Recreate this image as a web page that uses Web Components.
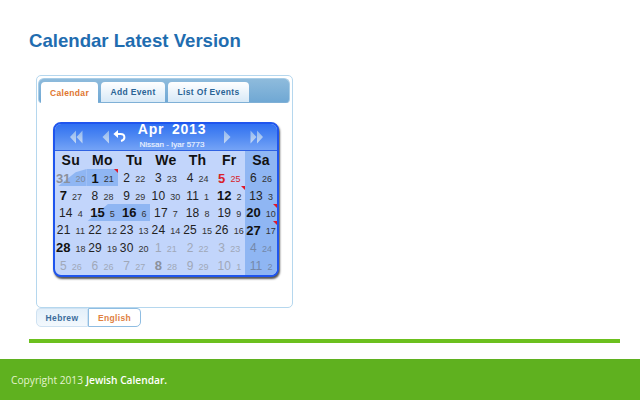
<!DOCTYPE html>
<html><head><meta charset="utf-8"><style>
html,body{margin:0;padding:0;background:#fff;height:400px;overflow:hidden}
</style></head><body>
<jc-page></jc-page>
<script>
class JcTabs extends HTMLElement{constructor(){super();this.attachShadow({mode:'open'}).innerHTML=`<style>
:host{display:flex;gap:3px;height:25px;box-sizing:border-box;margin:2px 2px 0 1px;padding:3px 0 0 2px;border-radius:6px 6px 4px 4px;background:linear-gradient(#8ebbdc,#70a8d4);border:1px solid #a9cde6;border-bottom:1px solid #7fb0d6;font:bold 8.5px "Liberation Sans",sans-serif;letter-spacing:.35px}
b{display:flex;align-items:center;justify-content:center;height:20px;border-radius:4px 4px 0 0;color:#2a6496;background:linear-gradient(#ffffff,#d7e9f7);font-weight:bold}
b.on{color:#e0762f;background:#fff;height:22px;margin-bottom:-2px}
</style><b class="on" style="width:57px">Calendar</b><b style="width:64px">Add Event</b><b style="width:81px">List Of Events</b>`}}
customElements.define('jc-tabs',JcTabs);

class JcArrow extends HTMLElement{constructor(){super();const k=this.getAttribute('kind');
const d={ll:'M7 .5L1 7L7 13.5ZM13.5 .5L7.5 7L13.5 13.5Z',l:'M7 .5L.5 7L7 13.5Z',r:'M1 .5L7.5 7L1 13.5Z',rr:'M.5 .5L6.5 7L.5 13.5ZM7 .5L13 7L7 13.5Z'}[k];
const w=(k=='ll'||k=='rr')?14:8;
this.attachShadow({mode:'open'}).innerHTML=`<style>:host{display:block;line-height:0}</style><svg width="${w}" height="14" viewBox="0 0 ${w} 14"><defs><linearGradient id="g" x1="0" y1="0" x2="0" y2="1"><stop offset="0" stop-color="#8fb6ee"/><stop offset="1" stop-color="#c6d9f4"/></linearGradient></defs><path d="${d}" fill="url(#g)"/></svg>`}}
customElements.define('jc-arrow',JcArrow);

class JcUndo extends HTMLElement{constructor(){super();this.attachShadow({mode:'open'}).innerHTML=`<style>:host{display:block;line-height:0;margin-top:-3px}</style><svg width="13" height="12" viewBox="0 0 13 12"><path d="M3.5 4H7.5C10 4 11.4 5.5 11.4 7.3C11.4 9.1 10 10.6 8 11" fill="none" stroke="#fff" stroke-width="2"/><path d="M5 0V8L.4 4Z" fill="#fff"/></svg>`}}
customElements.define('jc-undo',JcUndo);

class JcCell extends HTMLElement{constructor(){super();
const a=n=>this.getAttribute(n);
this.attachShadow({mode:'open'}).innerHTML=`<style>
:host{display:flex;align-items:center;justify-content:center;gap:5px;position:relative;padding-top:1px;box-sizing:border-box;font:12px "Liberation Sans",sans-serif;color:#222;white-space:nowrap;min-width:0}
b{font-weight:normal;position:relative;font-size:12px;letter-spacing:.2px}
i{font-style:normal;font-size:9px;position:relative;top:1px;color:#333}
:host(.bold) b{font-weight:bold;font-size:13px;color:#111;letter-spacing:0}
:host(.red) b,:host(.red) i{color:#d8232a}
:host(.red) b{font-weight:bold;font-size:13px}
:host(.mut) b,:host(.mut) i{color:#a0a8b8}
:host(.mut.bold) b{color:#8b909c}
:host(.mut.dark) i{color:#7d8898}
:host(.mut.sm) b,:host(.mut.sm) i{color:#7488aa}
.mark{position:absolute;right:0;top:0;width:0;height:0;border-top:4px solid #e0192a;border-left:4px solid transparent}
.w{position:absolute;inset:0;background:#8fb6f3}
.w1{clip-path:polygon(8% 100%,65% 18%,100% 0,100% 100%)}
.w2{clip-path:polygon(2% 100%,68% 0,100% 0,100% 100%)}
</style>${a('w')?`<span class="w ${a('w')}"></span>`:''}<b>${a('n')}</b><i>${a('h')}</i>${a('mark')!=null?'<span class="mark"></span>':''}`;
this.className=a('cls')||'';}}
customElements.define('jc-cell',JcCell);

class JcCalendar extends HTMLElement{constructor(){super();
const days=['Su','Mo','Tu','We','Th','Fr','Sa'];
const cells=[
['31',20,'mut bold dark'],['1',21,'bold f','m'],['2',22],['3',23],['4',24],['5',25,'red'],['6',26],
['7',27,'bold'],['8',28],['9',29],['10',30],['11',1],['12',2,'bold','m'],['13',3],
['14',4],['15',5,'bold w2'],['16',6,'bold f'],['17',7],['18',8],['19',9],['20',10,'bold','m'],
['21',11],['22',12],['23',13],['24',14],['25',15],['26',16],['27',17,'bold','m'],
['28',18,'bold'],['29',19],['30',20],['1',21,'mut'],['2',22,'mut'],['3',23,'mut'],['4',24,'mut sm'],
['5',26,'mut'],['6',26,'mut'],['7',27,'mut'],['8',28,'mut bold'],['9',29,'mut'],['10',1,'mut'],['11',2,'mut sm']];
let h='';
days.forEach((d,i)=>h+=`<span class="d${i==6?' sat':''}">${d}</span>`);
cells.forEach((c,i)=>{const[n,he,k='',m]=c;const parts=k.split(' ');const isF=parts.includes('f');const w2=parts.includes('w2');const sat=i%7==6;
const cl=parts.filter(x=>x!='f'&&x!='w2').join(' ');
const w=i==0?' w="w1"':w2?' w="w2"':'';
h+=`<jc-cell n="${n}" h="${he}" cls="${cl}"${w}${m?' mark':''} style="${isF||sat?'background:#8fb6f3;':''}"></jc-cell>`;});
this.attachShadow({mode:'open'}).innerHTML=`<style>
:host{display:block;width:226px;height:155px;box-sizing:border-box;margin:19px 0 0 16px;border:2px solid #1f55ee;border-radius:8px;overflow:hidden;background:#c2d5fb;box-shadow:1px 2px 2px #555}
.top{height:27px;box-sizing:border-box;display:grid;grid-template-columns:33px 11px 12px 94px 31px 1fr;align-items:center;background:linear-gradient(#2f70f2 0,#5089f2 50%,#74a3f6 100%);padding-left:14px;border-bottom:1px solid #2f62e2}
.top jc-arrow[kind=r]{margin-left:4px}
.title{display:flex;flex-direction:column;align-items:center;color:#fff}
.title b{font:bold 14px/14px "Liberation Sans",sans-serif;word-spacing:3px;letter-spacing:.8px;margin-top:-4px}
.title span{font:8px/9px "Liberation Sans",sans-serif;margin-top:4px;color:#eef4ff;-webkit-text-stroke:.15px #eef4ff}
.grid{display:grid;grid-template-columns:repeat(6,31.7px) 1fr;grid-template-rows:18px repeat(5,17.4px) 19px}
.d{font:bold 14px/18px "Liberation Sans",sans-serif;letter-spacing:.3px;color:#111;text-align:center}
.sat{background:#8fb6f3}
</style><div class="top"><jc-arrow kind="ll"></jc-arrow><jc-arrow kind="l"></jc-arrow><jc-undo></jc-undo><div class="title"><b>Apr 2013</b><span>Nissan - Iyar 5773</span></div><jc-arrow kind="r"></jc-arrow><jc-arrow kind="rr"></jc-arrow></div>
<div class="grid">${h}</div>`}}
customElements.define('jc-calendar',JcCalendar);

class JcLang extends HTMLElement{constructor(){super();this.attachShadow({mode:'open'}).innerHTML=`<style>
:host{display:flex;margin:0 0 0 36px;height:19px;font:bold 8.5px "Liberation Sans",sans-serif;letter-spacing:.35px}
span{display:flex;align-items:center;justify-content:center;box-sizing:border-box;border:1px solid #b5d3ea}
.a{width:52px;border-radius:4px 0 0 5px;color:#3b6c9c;background:linear-gradient(#e3f0fa,#f3f8fd);border-color:#cfe2f2}
.b{width:53px;border-radius:0 4px 5px 0;color:#e0803f;background:#fff;border-color:#8fbde2}
</style><span class="a">Hebrew</span><span class="b">English</span>`}}
customElements.define('jc-lang',JcLang);

class JcPage extends HTMLElement{constructor(){super();this.attachShadow({mode:'open'}).innerHTML=`<style>
:host{display:flex;flex-direction:column;height:400px;overflow:hidden}
h1{margin:29px 0 0 29px;font:bold 18.6px/24px "Liberation Sans",sans-serif;color:#1f6db0;height:24px}
.panel{box-sizing:border-box;margin:22px 0 0 36px;width:257px;height:233px;border:1px solid #b5d7ee;border-radius:5px;background:#fff}
.rule{margin:12px 20px 0 29px;height:4px;background:#6cc01e;flex:none}
footer{margin-top:auto;height:41px;background:#5fb11f;box-sizing:border-box;display:flex;align-items:center;padding-left:11px;font:10.2px "Open Sans",sans-serif;color:#e4f3cf}
footer b{color:#fff;margin-left:3px;font-weight:600}
</style><h1>Calendar Latest Version</h1><div class="panel"><jc-tabs></jc-tabs><jc-calendar></jc-calendar></div><jc-lang></jc-lang><div class="rule"></div><footer>Copyright 2013 <b>Jewish Calendar.</b></footer>`}}
customElements.define('jc-page',JcPage);
</script></body></html>
